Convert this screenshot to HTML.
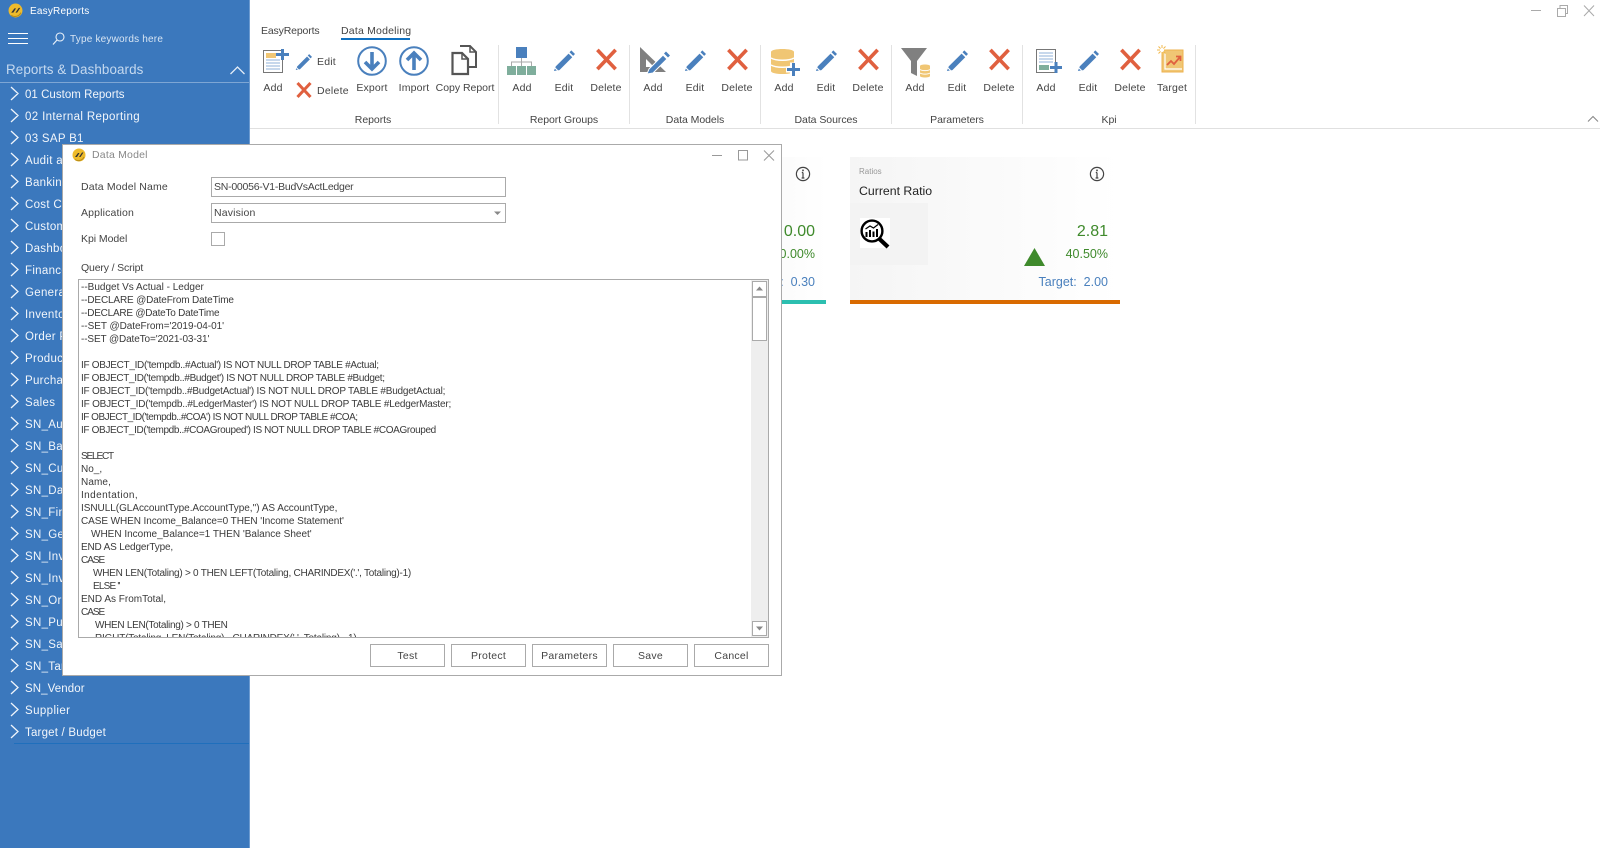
<!DOCTYPE html>
<html><head><meta charset="utf-8"><title>EasyReports</title>
<style>
html,body{margin:0;padding:0;width:1600px;height:848px;overflow:hidden;background:#fff;font-family:"Liberation Sans",sans-serif;color:#444}
*{box-sizing:border-box}
.a{position:absolute;white-space:nowrap}
.c{position:absolute;white-space:nowrap;transform:translate(-50%,0);font-size:10.5px;line-height:14px;color:#444;letter-spacing:.15px}
.g{letter-spacing:-.05px}
svg{position:absolute;overflow:visible}
#side{position:absolute;left:0;top:0;width:250px;height:848px;background:#3b78bd;border-right:1px solid #6d9bd0}
.r{position:absolute;left:25px;color:#f2f6fb;font-size:11.5px;line-height:16px;letter-spacing:.3px;white-space:nowrap}
.sep{position:absolute;top:45px;width:1px;height:79px;background:#e2e2e2}
#dlg{position:absolute;left:62px;top:144px;width:720px;height:532px;background:#fff;border:1px solid #aaa}
.lb{position:absolute;font-size:10.5px;line-height:14px;color:#444;letter-spacing:.15px;white-space:nowrap}
.in{position:absolute;background:#fff;border:1px solid #aaa}
.b{position:absolute;top:644px;width:75px;height:23px;border:1px solid #aaa;background:#fff;text-align:center;font-size:10.5px;line-height:23px;color:#444;letter-spacing:.25px}
#q{position:absolute;left:78px;top:279px;width:691px;height:359px;border:1px solid #aaa;overflow:hidden;background:#fff}
#q div{position:absolute;left:2px;font-size:10px;line-height:13px;height:13px;color:#3a3a3a;white-space:nowrap}
</style></head><body>
<svg width="0" height="0" style="position:absolute">
<defs>
<symbol id="pen" viewBox="0 0 24 24"><path d="M3 19 L17 5 L21 9 L7 23 L1 24 Z" fill="#4a80bd"/><path d="M18 3.5 L20 1.5 L24 5.5 L22 7.5 Z" fill="#4a80bd"/><path d="M1.5 20 L5 23.5" stroke="#fff" stroke-width="1.2"/></symbol>
<symbol id="del" viewBox="0 0 24 24"><path d="M2.5 2 L21.5 22 M21.5 2 L2.5 22" stroke="#e0603f" stroke-width="3.8" fill="none"/></symbol>
<symbol id="logo" viewBox="0 0 14 14"><circle cx="7" cy="7" r="6.5" fill="#eebb2c"/><path d="M3 9 L6 5 L7.5 5 L5 9Z M7 9 L10 4.5 L11.5 4.5 L8.5 9Z" fill="#333"/><path d="M3 11.5 A6 6 0 0 0 12 9" stroke="#b98d18" fill="none"/></symbol>
<symbol id="info" viewBox="0 0 16 16"><circle cx="8" cy="8" r="6.6" fill="none" stroke="#444" stroke-width="1.2"/><path d="M8 6.5 V12 M6.6 12 H9.4 M6.8 6.5 H8" stroke="#444" stroke-width="1.2" fill="none"/><rect x="7.2" y="3.6" width="1.6" height="1.6" fill="#444"/></symbol>
</defs></svg>

<!-- sidebar -->
<div id="side">
<svg style="left:8px;top:3px" width="15" height="15"><use href="#logo" width="15" height="15"/></svg>
<div class="a" style="left:30px;top:4px;font-size:10px;line-height:15px;color:#fff;letter-spacing:.2px">EasyReports</div>
<svg style="left:8px;top:32px" width="21" height="13"><path d="M0 1.5H20 M0 6.5H20 M0 11.5H20" stroke="#fff" stroke-width="1"/></svg>
<svg style="left:52px;top:32px" width="13" height="13"><circle cx="8" cy="5" r="4" fill="none" stroke="#e8f0f9" stroke-width="1.1"/><path d="M5 8 L1 12.5" stroke="#e8f0f9" stroke-width="1.2"/></svg>
<div class="a" style="left:70px;top:33px;font-size:10px;line-height:14px;color:#d8e5f3;letter-spacing:.2px">Type keywords here</div>
<div class="a" style="left:6px;top:61px;font-size:13.4px;line-height:18px;color:#c5d9ef;letter-spacing:.1px">Reports &amp; Dashboards</div>
<svg style="left:230px;top:66px" width="15" height="9"><path d="M0.5 8 L7.5 1 L14.5 8" fill="none" stroke="#e4edf7" stroke-width="1.3"/></svg>
<div style="position:absolute;left:0;top:82px;width:249px;height:1px;background:#7ea6d4"></div>
<div class="r" style="top:87px;letter-spacing:.03px">01 Custom Reports</div>
<div class="r" style="top:109px;letter-spacing:.36px">02 Internal Reporting</div>
<div class="r" style="top:131px">03 SAP B1</div>
<div class="r" style="top:153px">Audit and Control</div>
<div class="r" style="top:175px">Banking</div>
<div class="r" style="top:197px">Cost Center</div>
<div class="r" style="top:219px">Customer</div>
<div class="r" style="top:241px">Dashboard</div>
<div class="r" style="top:263px">Finance</div>
<div class="r" style="top:285px">General</div>
<div class="r" style="top:307px">Inventory</div>
<div class="r" style="top:329px">Order Processing</div>
<div class="r" style="top:351px">Production</div>
<div class="r" style="top:373px">Purchase</div>
<div class="r" style="top:395px">Sales</div>
<div class="r" style="top:417px">SN_Audit</div>
<div class="r" style="top:439px">SN_Banking</div>
<div class="r" style="top:461px">SN_Customer</div>
<div class="r" style="top:483px">SN_Dashboard</div>
<div class="r" style="top:505px">SN_Finance</div>
<div class="r" style="top:527px">SN_General</div>
<div class="r" style="top:549px">SN_Inventory</div>
<div class="r" style="top:571px">SN_Inventory</div>
<div class="r" style="top:593px">SN_Order</div>
<div class="r" style="top:615px">SN_Purchase</div>
<div class="r" style="top:637px">SN_Sales</div>
<div class="r" style="top:659px">SN_Target</div>
<div class="r" style="top:681px;letter-spacing:.1px">SN_Vendor</div>
<div class="r" style="top:703px;letter-spacing:.4px">Supplier</div>
<div class="r" style="top:725px;letter-spacing:.2px">Target / Budget</div>
<svg style="left:0;top:-1px" width="24" height="760"><path fill="none" stroke="#eef4fb" stroke-width="1.3" d="M11 88l7 6.5-7 6.5M11 110l7 6.5-7 6.5M11 132l7 6.5-7 6.5M11 154l7 6.5-7 6.5M11 176l7 6.5-7 6.5M11 198l7 6.5-7 6.5M11 220l7 6.5-7 6.5M11 242l7 6.5-7 6.5M11 264l7 6.5-7 6.5M11 286l7 6.5-7 6.5M11 308l7 6.5-7 6.5M11 330l7 6.5-7 6.5M11 352l7 6.5-7 6.5M11 374l7 6.5-7 6.5M11 396l7 6.5-7 6.5M11 418l7 6.5-7 6.5M11 440l7 6.5-7 6.5M11 462l7 6.5-7 6.5M11 484l7 6.5-7 6.5M11 506l7 6.5-7 6.5M11 528l7 6.5-7 6.5M11 550l7 6.5-7 6.5M11 572l7 6.5-7 6.5M11 594l7 6.5-7 6.5M11 616l7 6.5-7 6.5M11 638l7 6.5-7 6.5M11 660l7 6.5-7 6.5M11 682l7 6.5-7 6.5M11 704l7 6.5-7 6.5M11 726l7 6.5-7 6.5"/></svg>
<div style="position:absolute;left:14px;top:743px;width:235px;height:1px;background:#1f6fbc"></div>
</div>

<!-- window controls -->
<svg style="left:1530px;top:3px" width="68" height="16"><path d="M1 7.5H11" stroke="#aaa" fill="none"/><path d="M27.5 5.5H35.5V13.5H27.5Z M30 5V2.5H37.5V10.5H36" stroke="#aaa" fill="none"/><path d="M54 2.5L64 13M64 2.5L54 13" stroke="#aaa" fill="none"/></svg>

<!-- tabs -->
<div class="a" style="left:261px;top:24px;font-size:10.5px;line-height:15px;color:#444;letter-spacing:-.15px">EasyReports</div>
<div class="a" style="left:341px;top:24px;font-size:10.5px;line-height:15px;color:#444;letter-spacing:.2px">Data Modeling</div>
<div style="position:absolute;left:341px;top:38px;width:69px;height:2px;background:#1070c0"></div>

<!-- ribbon -->
<div style="position:absolute;left:250px;top:128px;width:1350px;height:1px;background:#e0e0e0"></div>
<div class="sep" style="left:498px"></div><div class="sep" style="left:629px"></div><div class="sep" style="left:760px"></div><div class="sep" style="left:891px"></div><div class="sep" style="left:1022px"></div><div class="sep" style="left:1195px"></div>
<svg style="left:1587px;top:115px" width="12" height="8"><path d="M1 6.5L6 1.5L11 6.5" fill="none" stroke="#888" stroke-width="1.1"/></svg>

<!-- Reports icons -->
<svg style="left:263px;top:49px" width="26" height="24"><rect x=".5" y="1.5" width="19" height="22" fill="#fff" stroke="#777"/><rect x="3" y="4" width="10" height="5" fill="#f0c674"/><path d="M3 11H17M3 14H17M3 17H17M3 20H17" stroke="#8fb2d8"/><path d="M13 5.5H26M19.5 0V11" stroke="#4a80bd" stroke-width="3"/></svg>
<svg style="left:295px;top:53px" width="17" height="17"><use href="#pen" width="17" height="17"/></svg>
<svg style="left:296px;top:82px" width="16" height="16"><path d="M1.5 1L14.5 15M14.5 1L1.5 15" stroke="#e0603f" stroke-width="3" fill="none"/></svg>
<svg style="left:357px;top:46px" width="30" height="30"><circle cx="15" cy="15" r="13.8" fill="#fff" stroke="#4a80bd" stroke-width="2"/><path d="M15 6V23M8 16L15 23L22 16" fill="none" stroke="#4a80bd" stroke-width="3.6"/></svg>
<svg style="left:399px;top:46px" width="30" height="30"><circle cx="15" cy="15" r="13.8" fill="#fff" stroke="#4a80bd" stroke-width="2"/><path d="M15 24V7M8 14L15 7L22 14" fill="none" stroke="#4a80bd" stroke-width="3.6"/></svg>
<svg style="left:451px;top:45px" width="26" height="30"><path d="M9 1H19L25 7V22H18" fill="#fff" stroke="#555" stroke-width="2"/><path d="M19 1V7H25" fill="none" stroke="#555" stroke-width="1.5"/><path d="M1.5 8H11L17 14V29H1.5Z" fill="#fff" stroke="#555" stroke-width="2.2"/><path d="M11 8V14H17" fill="none" stroke="#555" stroke-width="1.5"/></svg>

<div class="c" style="left:273px;top:81px">Add</div>
<div class="a" style="left:317px;top:55px;font-size:10.5px;line-height:14px;letter-spacing:.2px">Edit</div>
<div class="a" style="left:317px;top:84px;font-size:10.5px;line-height:14px;letter-spacing:.25px">Delete</div>
<div class="c" style="left:372px;top:81px">Export</div>
<div class="c" style="left:414px;top:81px">Import</div>
<div class="c" style="left:465px;top:81px;letter-spacing:-.02px">Copy Report</div>
<div class="c g" style="left:373px;top:113px">Reports</div>

<!-- Report Groups -->
<svg style="left:507px;top:47px" width="30" height="28"><rect x="9" y="0" width="11" height="11" fill="#4a80bd"/><path d="M14.5 11V15M4.5 19V15H24.5V19M14.5 15V19" fill="none" stroke="#aaa"/><rect x="0" y="19" width="9" height="9" fill="#7fae9c"/><rect x="10" y="19" width="9" height="9" fill="#7fae9c"/><rect x="20" y="19" width="9" height="9" fill="#7fae9c"/></svg>
<svg style="left:553px;top:49px" width="22" height="22"><use href="#pen" width="22" height="22"/></svg>
<svg style="left:595px;top:48px" width="23" height="23"><use href="#del" width="23" height="23"/></svg>
<div class="c" style="left:522px;top:81px">Add</div><div class="c" style="left:564px;top:81px">Edit</div><div class="c" style="left:606px;top:81px">Delete</div>
<div class="c g" style="left:564px;top:113px">Report Groups</div>

<!-- Data Models -->
<svg style="left:640px;top:47px" width="30" height="28"><path d="M0 0L26 25H0Z M6 12V20H14Z" fill="#808080" fill-rule="evenodd"/></svg>
<svg style="left:646px;top:50px" width="24" height="24"><path d="M3 19 L17 5 L21 9 L7 23 L1 24 Z" fill="#4a80bd" stroke="#fff" stroke-width="1"/><path d="M18 3.5 L20 1.5 L24 5.5 L22 7.5 Z" fill="#4a80bd"/></svg>
<svg style="left:684px;top:49px" width="22" height="22"><use href="#pen" width="22" height="22"/></svg>
<svg style="left:726px;top:48px" width="23" height="23"><use href="#del" width="23" height="23"/></svg>
<div class="c" style="left:653px;top:81px">Add</div><div class="c" style="left:695px;top:81px">Edit</div><div class="c" style="left:737px;top:81px">Delete</div>
<div class="c g" style="left:695px;top:113px">Data Models</div>

<!-- Data Sources -->
<svg style="left:771px;top:47px" width="30" height="30"><path d="M0 5C0 1 23 1 23 5V24C23 28 0 28 0 24Z" fill="#f0c674"/><path d="M0 11C5 14 18 14 23 11M0 18C5 21 18 21 23 18" fill="none" stroke="#fff" stroke-width="1.4"/><path d="M15 22.5H29M22 15.5V29.5" stroke="#fff" stroke-width="6"/><path d="M16 22.5H29M22.5 16V29" stroke="#4a80bd" stroke-width="3"/></svg>
<svg style="left:815px;top:49px" width="22" height="22"><use href="#pen" width="22" height="22"/></svg>
<svg style="left:857px;top:48px" width="23" height="23"><use href="#del" width="23" height="23"/></svg>
<div class="c" style="left:784px;top:81px">Add</div><div class="c" style="left:826px;top:81px">Edit</div><div class="c" style="left:868px;top:81px">Delete</div>
<div class="c g" style="left:826px;top:113px">Data Sources</div>

<!-- Parameters -->
<svg style="left:901px;top:48px" width="30" height="30"><path d="M0 0H26L16 13V28L10 25V13Z" fill="#808080"/><path d="M19 18C19 16 29 16 29 18V28C29 30 19 30 19 28Z" fill="#f0c674"/><path d="M19 21.5C21 23 27 23 29 21.5M19 25C21 26.5 27 26.5 29 25" fill="none" stroke="#fff"/></svg>
<svg style="left:946px;top:49px" width="22" height="22"><use href="#pen" width="22" height="22"/></svg>
<svg style="left:988px;top:48px" width="23" height="23"><use href="#del" width="23" height="23"/></svg>
<div class="c" style="left:915px;top:81px">Add</div><div class="c" style="left:957px;top:81px">Edit</div><div class="c" style="left:999px;top:81px">Delete</div>
<div class="c g" style="left:957px;top:113px">Parameters</div>

<!-- Kpi -->
<svg style="left:1036px;top:49px" width="26" height="24"><rect x=".5" y=".5" width="19" height="23" fill="#fff" stroke="#777"/><path d="M3 4H17M3 7H17M3 10H17M3 13H17" stroke="#8fb2d8"/><rect x="3" y="16" width="10" height="5" fill="#7fae9c"/><path d="M14 18.5H26M20 13V24" stroke="#4a80bd" stroke-width="3"/></svg>
<svg style="left:1077px;top:49px" width="22" height="22"><use href="#pen" width="22" height="22"/></svg>
<svg style="left:1119px;top:48px" width="23" height="23"><use href="#del" width="23" height="23"/></svg>
<svg style="left:1157px;top:45px" width="27" height="28"><rect x="5" y="5" width="21" height="22" fill="#f0c674" stroke="#eeb14e"/><path d="M8 8V24H25" fill="none" stroke="#fff" stroke-width="1.2"/><path d="M10 20L14 16L17 19L23 12M19 11.5H23.5V16" fill="none" stroke="#e0603f" stroke-width="1.8"/><path d="M5 0V10M0 5H10M1.5 1.5L8.5 8.5M8.5 1.5L1.5 8.5" stroke="#f2b84b"/><circle cx="5" cy="5" r="2" fill="#fff"/></svg>
<div class="c" style="left:1046px;top:81px">Add</div><div class="c" style="left:1088px;top:81px">Edit</div><div class="c" style="left:1130px;top:81px">Delete</div><div class="c" style="left:1172px;top:81px">Target</div>
<div class="c g" style="left:1109px;top:113px">Kpi</div>

<!-- left KPI card remnant -->
<div style="position:absolute;left:760px;top:157px;width:67px;height:143px;background:linear-gradient(90deg,#fafafa,#fff)"></div>
<svg style="left:795px;top:166px" width="16" height="16"><use href="#info" width="16" height="16"/></svg>
<div class="a" style="right:785px;top:222px;font-size:16px;line-height:20px;color:#3f8a2c">0.00</div>
<div class="a" style="right:785px;top:246px;font-size:12.5px;line-height:16px;color:#3f8a2c">0.00%</div>
<div class="a" style="right:785px;top:274px;font-size:12.5px;line-height:16px;color:#4a80bd">Target:&nbsp; 0.30</div>
<div style="position:absolute;left:760px;top:300px;width:66px;height:4px;background:#2cbfb0"></div>

<!-- right KPI card -->
<div style="position:absolute;left:850px;top:157px;width:270px;height:143px;background:linear-gradient(90deg,#f5f5f5,#fff)"></div>
<div style="position:absolute;left:850px;top:203px;width:78px;height:62px;background:#f3f3f3"></div>
<div style="position:absolute;left:860px;top:218px;width:30px;height:30px;background:#fff"></div>
<div class="a" style="left:859px;top:166px;font-size:8px;line-height:12px;color:#999">Ratios</div>
<div class="a" style="left:859px;top:183px;font-size:12.3px;line-height:16px;color:#222">Current Ratio</div>
<svg style="left:1089px;top:166px" width="16" height="16"><use href="#info" width="16" height="16"/></svg>
<svg style="left:860px;top:218px" width="30" height="30"><circle cx="12" cy="13" r="10.4" fill="#fff" stroke="#000" stroke-width="2.4"/><path d="M19.5 21L28 29" stroke="#000" stroke-width="4.2"/><path d="M6.5 19V14M10 19V12M13.5 19V13.5M17 19V11" stroke="#000" stroke-width="2"/><path d="M5.5 11L10 8L13.5 10L18 6.5" fill="none" stroke="#000" stroke-width="1.2"/></svg>
<div class="a" style="right:492px;top:222px;font-size:16px;line-height:20px;color:#3f8a2c">2.81</div>
<svg style="left:1024px;top:248px" width="21" height="18"><path d="M10.5 0L21 18H0Z" fill="#3f8a2c"/></svg>
<div class="a" style="right:492px;top:246px;font-size:12.5px;line-height:16px;color:#3f8a2c">40.50%</div>
<div class="a" style="right:492px;top:274px;font-size:12.5px;line-height:16px;color:#4a80bd">Target:&nbsp; 2.00</div>
<div style="position:absolute;left:850px;top:300px;width:270px;height:4px;background:#d96a00"></div>

<!-- dialog -->
<div id="dlg"></div>
<svg style="left:72px;top:148px" width="14" height="14"><use href="#logo" width="14" height="14"/></svg>
<div class="a" style="left:92px;top:148px;font-size:10.5px;line-height:15px;color:#888;letter-spacing:.2px">Data Model</div>
<svg style="left:712px;top:149px" width="66" height="13"><path d="M0 6.5H10" stroke="#999"/><rect x="26.5" y="1.5" width="9" height="9.5" fill="none" stroke="#999"/><path d="M52 1.5L62 11.5M62 1.5L52 11.5" stroke="#999"/></svg>

<div class="lb" style="left:81px;top:180px">Data Model Name</div>
<div class="in" style="left:211px;top:177px;width:295px;height:20px"></div>
<div class="a" style="left:214px;top:180px;font-size:10.5px;line-height:14px;letter-spacing:-.25px;color:#444">SN-00056-V1-BudVsActLedger</div>
<div class="lb" style="left:81px;top:206px">Application</div>
<div class="in" style="left:211px;top:203px;width:295px;height:20px"></div>
<div class="a" style="left:214px;top:206px;font-size:10.5px;line-height:14px;letter-spacing:.15px;color:#444">Navision</div>
<svg style="left:494px;top:211px" width="8" height="5"><path d="M0 0.5H7L3.5 4Z" fill="#888"/></svg>
<div class="lb" style="left:81px;top:232px;letter-spacing:-.05px">Kpi Model</div>
<div class="in" style="left:211px;top:232px;width:14px;height:14px"></div>
<div class="lb" style="left:81px;top:261px;letter-spacing:-.15px">Query / Script</div>

<div id="q">
<div style="top:1px">--Budget Vs Actual - Ledger</div>
<div style="top:14px;letter-spacing:-.15px">--DECLARE @DateFrom DateTime</div>
<div style="top:27px;letter-spacing:-.23px">--DECLARE @DateTo DateTime</div>
<div style="top:40px;letter-spacing:-.04px">--SET @DateFrom='2019-04-01'</div>
<div style="top:53px;letter-spacing:-.12px">--SET @DateTo='2021-03-31'</div>
<div style="top:79px;letter-spacing:-.31px">IF OBJECT_ID('tempdb..#Actual') IS NOT NULL DROP TABLE #Actual;</div>
<div style="top:92px;letter-spacing:-.34px">IF OBJECT_ID('tempdb..#Budget') IS NOT NULL DROP TABLE #Budget;</div>
<div style="top:105px;letter-spacing:-.22px">IF OBJECT_ID('tempdb..#BudgetActual') IS NOT NULL DROP TABLE #BudgetActual;</div>
<div style="top:118px;letter-spacing:-.2px">IF OBJECT_ID('tempdb..#LedgerMaster') IS NOT NULL DROP TABLE #LedgerMaster;</div>
<div style="top:131px;letter-spacing:-.5px">IF OBJECT_ID('tempdb..#COA') IS NOT NULL DROP TABLE #COA;</div>
<div style="top:144px;letter-spacing:-.36px">IF OBJECT_ID('tempdb..#COAGrouped') IS NOT NULL DROP TABLE #COAGrouped</div>
<div style="top:170px;letter-spacing:-1.15px">SELECT</div>
<div style="top:183px">No_,</div>
<div style="top:196px;letter-spacing:.1px">Name,</div>
<div style="top:209px;letter-spacing:.4px">Indentation,</div>
<div style="top:222px;letter-spacing:-.04px">ISNULL(GLAccountType.AccountType,'') AS AccountType,</div>
<div style="top:235px;letter-spacing:-.08px">CASE WHEN Income_Balance=0 THEN 'Income Statement'</div>
<div style="top:248px;left:12px">WHEN Income_Balance=1 THEN 'Balance Sheet'</div>
<div style="top:261px;letter-spacing:-.17px">END AS LedgerType,</div>
<div style="top:274px;letter-spacing:-1px">CASE</div>
<div style="top:287px;left:14px;letter-spacing:-.25px">WHEN LEN(Totaling) &gt; 0 THEN LEFT(Totaling, CHARINDEX('.', Totaling)-1)</div>
<div style="top:300px;left:14px;letter-spacing:-.8px">ELSE ''</div>
<div style="top:313px">END As FromTotal,</div>
<div style="top:326px;letter-spacing:-1px">CASE</div>
<div style="top:339px;left:16px;letter-spacing:-.3px">WHEN LEN(Totaling) &gt; 0 THEN</div>
<div style="top:352px;left:16px;letter-spacing:-.2px">RIGHT(Totaling, LEN(Totaling) - CHARINDEX('.', Totaling) - 1)</div>
</div>
<!-- scrollbar -->
<div style="position:absolute;left:751px;top:280px;width:17px;height:357px;background:#eee"></div>
<div style="position:absolute;left:752px;top:281px;width:15px;height:16px;background:#fff;border:1px solid #aaa"></div>
<svg style="left:756px;top:286px" width="8" height="5"><path d="M0 4.5H7L3.5 0.5Z" fill="#888"/></svg>
<div style="position:absolute;left:752px;top:297px;width:15px;height:44px;background:#fff;border:1px solid #aaa"></div>
<div style="position:absolute;left:752px;top:621px;width:15px;height:15px;background:#fff;border:1px solid #aaa"></div>
<svg style="left:756px;top:626px" width="8" height="5"><path d="M0 0.5H7L3.5 4.5Z" fill="#888"/></svg>

<div class="b" style="left:370px">Test</div>
<div class="b" style="left:451px">Protect</div>
<div class="b" style="left:532px">Parameters</div>
<div class="b" style="left:613px">Save</div>
<div class="b" style="left:694px">Cancel</div>
</body></html>
